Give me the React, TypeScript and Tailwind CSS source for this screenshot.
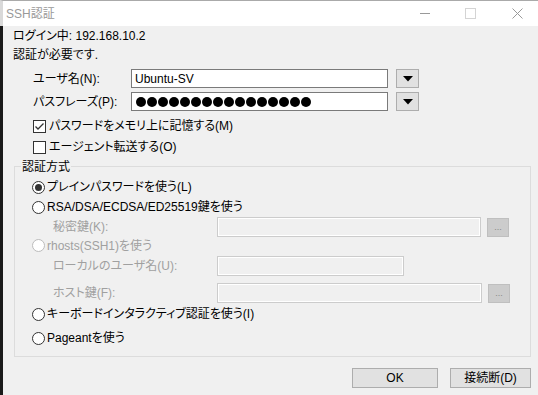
import React from 'react';

// font stack: latin in Liberation Sans, kana proportional via palt
const font = "font-['Liberation_Sans','Noto_Sans_CJK_JP',sans-serif] [font-feature-settings:'palt'] text-[12px] leading-none";

const Check = ({ checked, label }: { checked: boolean; label: string }) => (
  <div className="flex h-[20px] items-center">
    <span className="flex h-[13px] w-[13px] items-center justify-center border border-[#333] bg-white">
      {checked && (
        <svg width="11" height="11" viewBox="0 0 11 11">
          <path d="M1.5 5.5 L4 8 L9.5 2.5" stroke="#333" strokeWidth="1.3" fill="none" />
        </svg>
      )}
    </span>
    <span className="ml-[3px] text-black">{label}</span>
  </div>
);

const Radio = ({ checked, disabled, label, h = 'h-[20px]' }: { checked?: boolean; disabled?: boolean; label: string; h?: string }) => (
  <div className={`flex items-center ${h}`}>
    <span
      className={`flex h-[13px] w-[13px] items-center justify-center rounded-full border bg-white ${
        disabled ? 'border-[#bcbcbc]' : 'border-[#333]'
      }`}
    >
      {checked && <span className="h-[7px] w-[7px] rounded-full bg-[#333]" />}
    </span>
    <span className={`ml-[2px] ${disabled ? 'text-[#a0a0a0]' : 'text-black'}`}>{label}</span>
  </div>
);

const DropBtn = () => (
  <div className="ml-[8px] flex h-[19px] w-[23px] items-center justify-center border border-[#adadad] bg-[#e1e1e1]">
    <svg width="10" height="6" viewBox="0 0 10 6">
      <path d="M0 0 H10 L5 5.5 Z" fill="#000" />
    </svg>
  </div>
);

const DisabledInput = ({ w }: { w: string }) => (
  <div className={`h-[20px] ${w} border border-[#cccccc] bg-[#f0f0f0] shadow-[inset_0_0_0_1px_#ffffff]`} />
);

const DotsBtn = () => (
  <div className="ml-[6px] flex h-[19px] w-[22px] items-center justify-center border border-[#bfbfbf] bg-[#cccccc] text-[9px] text-[#888]">
    ...
  </div>
);

const dots = Array.from({ length: 16 });

export default function App() {
  return (
    <div className={`flex h-[395px] w-[538px] flex-col overflow-hidden bg-[#f0f0f0] ${font}`}>
      {/* title bar */}
      <div className="flex h-[26px] items-center border-t border-l-[3px] border-t-[#aaaaaa] border-l-[#d9d9d9] bg-white">
        <span className="ml-[3px] text-[#999]">SSH認証</span>
        <div className="ml-auto flex items-center">
          <svg width="11" height="11" viewBox="0 0 11 11" className="mr-[34px]">
            <path d="M0 5.5 H10" stroke="#999" strokeWidth="1" />
          </svg>
          <svg width="11" height="11" viewBox="0 0 11 11" className="mr-[36px]">
            <rect x="0.5" y="0.5" width="10" height="10" fill="none" stroke="#d4d4d4" />
          </svg>
          <svg width="11" height="11" viewBox="0 0 11 11" className="mr-[15px]">
            <path d="M0.5 0.5 L10.5 10.5 M10.5 0.5 L0.5 10.5" stroke="#999" strokeWidth="1" />
          </svg>
        </div>
      </div>

      {/* body */}
      <div className="flex flex-1 flex-col border-l-[3px] border-l-[#1a1a1a] pt-[1px] pr-[7px] pl-[10px]">
        <div className="flex h-[18px] items-center">ログイン中: 192.168.10.2</div>
        <div className="flex h-[19px] items-center">認証が必要です.</div>

        <div className="mt-[5px] flex h-[19px] items-center pl-[20px]">
          <span className="w-[98px]">ユーザ名(N):</span>
          <div className="flex h-[19px] w-[257px] items-center border border-[#7a7a7a] bg-white pl-[3px]">Ubuntu-SV</div>
          <DropBtn />
        </div>
        <div className="mt-[4px] flex h-[19px] items-center pl-[20px]">
          <span className="w-[98px]">パスフレーズ(P):</span>
          <div className="flex h-[19px] w-[257px] items-center gap-[1px] border border-[#7a7a7a] bg-white pl-[4px]">
            {dots.map((_, i) => (
              <span key={i} className="h-[10px] w-[10px] rounded-full bg-black" />
            ))}
          </div>
          <DropBtn />
        </div>

        <div className="mt-[5px] pl-[20px]">
          <Check checked label="パスワードをメモリ上に記憶する(M)" />
        </div>
        <div className="mt-[1px] pl-[20px]">
          <Check checked={false} label="エージェント転送する(O)" />
        </div>

        {/* auth method group */}
        <div className="relative mt-[9px] ml-[1px] flex w-[517px] flex-col border border-[#dcdcdc] pt-[10px] pb-[8px] pl-[17px]">
          <span className="absolute -top-[8px] left-[6px] bg-[#f0f0f0] px-[1px] leading-[16px]">認証方式</span>
          <Radio checked label="プレインパスワードを使う(L)" />
          <Radio label="RSA/DSA/ECDSA/ED25519鍵を使う" />
          <div className="flex h-[20px] items-center pl-[21px]">
            <span className="w-[164px] text-[#a0a0a0]">秘密鍵(K):</span>
            <DisabledInput w="w-[264px]" />
            <DotsBtn />
          </div>
          <Radio disabled label="rhosts(SSH1)を使う" h="h-[17px]" />
          <div className="mt-[2px] flex h-[20px] items-center pl-[21px]">
            <span className="w-[164px] text-[#a0a0a0]">ローカルのユーザ名(U):</span>
            <DisabledInput w="w-[187px]" />
          </div>
          <div className="mt-[7px] flex h-[20px] items-center pl-[21px]">
            <span className="w-[164px] text-[#a0a0a0]">ホスト鍵(F):</span>
            <DisabledInput w="w-[265px]" />
            <DotsBtn />
          </div>
          <div className="mt-[1px]">
            <Radio label="キーボードインタラクティブ認証を使う(I)" />
          </div>
          <div className="mt-[4px]">
            <Radio label="Pageantを使う" />
          </div>
        </div>

        <div className="mt-[11px] flex justify-end gap-[12px]">
          <button className="flex h-[20px] w-[86px] items-center justify-center border border-[#adadad] bg-[#e1e1e1]">OK</button>
          <button className="flex h-[20px] w-[81px] items-center justify-center border border-[#adadad] bg-[#e1e1e1]">接続断(D)</button>
        </div>
      </div>
    </div>
  );
}
